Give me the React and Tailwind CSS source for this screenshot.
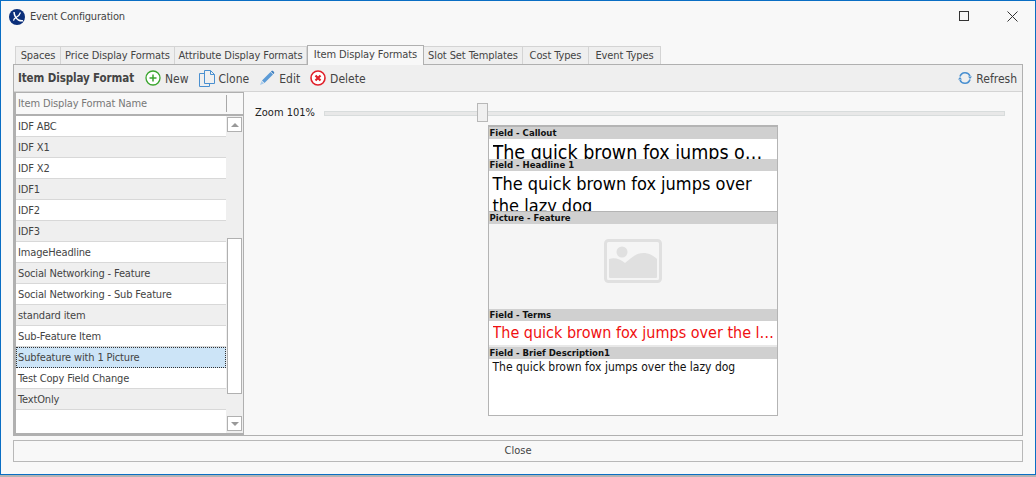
import React from 'react'

const font = 'font-["DejaVu_Sans_Condensed","DejaVu_Sans",sans-serif] font-stretch-semi-condensed'

const tabs = ['Spaces', 'Price Display Formats', 'Attribute Display Formats', 'Item Display Formats', 'Slot Set Templates', 'Cost Types', 'Event Types']
const tabWidths = [46, 114, 132, 117, 99, 66, 72]

const rows = [
  'IDF ABC', 'IDF X1', 'IDF X2', 'IDF1', 'IDF2', 'IDF3', 'ImageHeadline',
  'Social Networking - Feature', 'Social Networking - Sub Feature', 'standard item',
  'Sub-Feature Item', 'Subfeature with 1 Picture', 'Test Copy Field Change', 'TextOnly',
]

function Logo() {
  return (
    <svg width="16" height="16" viewBox="0 0 16 16" className="shrink-0">
      <circle cx="8" cy="8" r="8" fill="#0b2f7a" />
      <path d="M5 3c.3 3.500 2 6.500 4.500 8 1.500.8 3 1 4.500.8" fill="none" stroke="#fff" strokeWidth="1.500" />
      <path d="M11.500 3.500c-.8 2.500-2.500 4-4.500 5-1.300.7-2.300 1.700-2.500 3.200" fill="none" stroke="#fff" strokeWidth="1.200" />
    </svg>
  )
}

function NewIcon() {
  return (
    <svg width="16" height="16" viewBox="0 0 16 16" className="shrink-0">
      <circle cx="8" cy="8" r="7" fill="#fff" stroke="#3aa52e" strokeWidth="1.300" />
      <path d="M8 4.500v7M4.500 8h7" stroke="#3aa52e" strokeWidth="1.500" />
    </svg>
  )
}

function CloneIcon() {
  return (
    <svg width="16" height="17" viewBox="0 0 16 17" className="shrink-0" fill="none" stroke="#4a90d0" strokeWidth="1">
      <path d="M5.500 3.500H.5v13h10v-3" />
      <path d="M5.500.5h6l4 4v9h-10z" fill="#f0f0f0" />
      <path d="M11.500.5v4h4" />
    </svg>
  )
}

function EditIcon() {
  return (
    <svg width="16" height="16" viewBox="0 0 16 16" className="shrink-0">
      <path d="M3 10.500L11.500 2l2.500 2.500L5.500 13z" fill="#5c9bd6" />
      <path d="M12.300 1.200c.6-.6 1.400-.6 2 0l.5.5c.6.6.6 1.400 0 2l-.4.400-2.500-2.500z" fill="#3f7fbe" />
      <path d="M1 15l1.600-4 2.400 2.400z" fill="#a9cbea" />
    </svg>
  )
}

function DeleteIcon() {
  return (
    <svg width="16" height="16" viewBox="0 0 16 16" className="shrink-0">
      <circle cx="8" cy="8" r="7" fill="#fff" stroke="#e0202a" strokeWidth="1.600" />
      <path d="M5.500 5.500l5 5M10.500 5.500l-5 5" stroke="#e0202a" strokeWidth="2.200" />
    </svg>
  )
}

function RefreshIcon() {
  return (
    <svg width="14" height="14" viewBox="0 0 14 14" className="shrink-0" fill="none">
      <path d="M2 5.500A5.300 5.300 0 0 1 12 5" stroke="#4a90d0" strokeWidth="1.600" />
      <path d="M12 8.500A5.300 5.300 0 0 1 2 9" stroke="#4a90d0" strokeWidth="1.600" />
      <path d="M10 5.500h4l-2 2.500zM0 8.500h4L2 6z" fill="#4a90d0" />
    </svg>
  )
}

function PicturePlaceholder() {
  return (
    <svg width="58" height="44" viewBox="0 0 58 44">
      <rect x="1.500" y="1.500" width="55" height="41" rx="3" fill="none" stroke="#e0e0e0" strokeWidth="3" />
      <circle cx="18" cy="13" r="5.500" fill="#e0e0e0" />
      <path d="M5 20c6-2 11 0 16 4 6-5 12-11 20-10 5 .5 9 3 12 6v18a1 1 0 0 1-1 1H6a1 1 0 0 1-1-1z" fill="#e0e0e0" />
    </svg>
  )
}

function ToolButton({ icon, label }) {
  return (
    <div className="flex items-center gap-[4px]">
      {icon}
      <span className="pt-[1px] text-[12px]">{label}</span>
    </div>
  )
}

function FieldBlock({ title, height, children, className }) {
  return (
    <div className={`flex flex-col overflow-hidden ${height}`}>
      <div className="h-[12px] shrink-0 bg-[#d0d0d0] pl-[1px] text-[9.5px] leading-[12px] font-bold text-[#111]">{title}</div>
      <div className={`min-h-0 flex-1 overflow-hidden pl-[4px] ${className}`}>{children}</div>
    </div>
  )
}

export default function App() {
  return (
    <div className={`h-[477px] w-[1036px] overflow-hidden bg-[#b4b4b4] text-[11px] text-[#444] ${font}`}>
      <div className="flex h-[475px] flex-col border border-[#0a6ec4] bg-[#f8f8f8]">
        {/* title bar */}
        <div className="flex h-[31px] shrink-0 items-center pl-[8px]">
          <Logo />
          <span className="ml-[5px] pt-[1px] tracking-[-0.2px] text-[#444]">Event Configuration</span>
          <div className="ml-auto mb-[1px] mr-[17px] flex items-center gap-[38px]">
            <div className="h-[10px] w-[10px] border border-[#333]" />
            <svg width="11" height="11" viewBox="0 0 11 11"><path d="M.5.5l10 10M10.500.5l-10 10" stroke="#333" /></svg>
          </div>
        </div>

        {/* tabs */}
        <div className="mt-[13px] flex h-[19px] shrink-0 items-end pl-[14px]">
          {tabs.map((t, i) =>
            i === 3 ? (
              <div key={t} style={{ width: tabWidths[i] }} className="z-10 mb-[-1px] flex h-[20px] shrink-0 items-center justify-center whitespace-nowrap border border-b-0 border-[#b0b0b0] bg-[#f8f8f8] pb-[1px] tracking-[-0.1px]">{t}</div>
            ) : (
              <div key={t} style={{ width: tabWidths[i] }} className="flex h-[18px] shrink-0 items-center justify-center whitespace-nowrap border border-b-0 border-l-0 border-[#d4d4d4] bg-[#efefef] pt-[1px] tracking-[-0.1px] first:border-l">{t}</div>
            )
          )}
        </div>

        {/* main panel */}
        <div className="mx-[12px] flex h-[372px] shrink-0 flex-col border border-[#b0b0b0] bg-[#f8f8f8]">
          <div className="flex h-[27px] shrink-0 items-center border-b border-[#d4d4d4] bg-[#efefef] pl-[4px] pr-[5px] text-[11.5px]">
            <span className="w-[127px] shrink-0 pt-[1px] font-bold tracking-[-0.1px]">Item Display Format</span>
            <div className="flex items-center gap-[10px]">
              <ToolButton icon={<NewIcon />} label="New" />
              <ToolButton icon={<CloneIcon />} label="Clone" />
              <ToolButton icon={<EditIcon />} label="Edit" />
              <ToolButton icon={<DeleteIcon />} label="Delete" />
            </div>
            <div className="ml-auto">
              <ToolButton icon={<RefreshIcon />} label="Refresh" />
            </div>
          </div>

          <div className="flex min-h-0 flex-1">
            {/* list */}
            <div className="flex w-[230px] shrink-0 flex-col border-r border-[#b0b0b0] tracking-[-0.15px]">
              <div className="flex h-[24px] shrink-0 border-y border-b-2 border-l-2 border-[#b0b0b0]">
                <div className="my-[2px] flex w-[211px] items-center border-r border-r-[#a8a8a8] pl-[2px] pt-[2px] text-[#777]">Item Display Format Name</div>
              </div>
              <div className="flex min-h-0 flex-1 border-b-2 border-l-2 border-[#b0b0b0]">
                <div className="flex w-[210px] shrink-0 flex-col bg-white">
                  {rows.map((r, i) => {
                    const selected = r === 'Subfeature with 1 Picture'
                    return (
                      <div
                        key={r}
                        className={`flex h-[21px] shrink-0 items-center truncate pt-[2px] ${selected ? 'border border-dotted border-[#333] bg-[#cce4f7] pl-[1px]' : `border-b border-[#d8d8d8] pl-[2px] ${i % 2 ? 'bg-[#efefef]' : 'bg-white'}`}`}
                      >
                        {r}
                      </div>
                    )
                  })}
                </div>
                <div className="flex flex-1 flex-col items-center bg-[#efefef] pt-[1px] pb-[2px]">
                  <div className="flex h-[15px] w-[15px] shrink-0 items-center justify-center border border-[#b0b0b0] bg-white">
                    <div className="h-0 w-0 border-x-[4px] border-b-[4px] border-x-transparent border-b-[#999]" />
                  </div>
                  <div className="mt-[106px] h-[156px] w-[15px] shrink-0 border border-[#b0b0b0] bg-white" />
                  <div className="mt-auto flex h-[15px] w-[15px] shrink-0 items-center justify-center border border-[#b0b0b0] bg-white">
                    <div className="h-0 w-0 border-x-[4px] border-t-[4px] border-x-transparent border-t-[#999]" />
                  </div>
                </div>
              </div>
            </div>

            {/* preview */}
            <div className="flex min-w-0 flex-1 flex-col">
              <div className="flex h-[33px] shrink-0 items-center pl-[11px] pr-[17px] pt-[9px] text-[#222]">
                <span className="w-[69px] shrink-0 whitespace-nowrap">Zoom 101%</span>
                <div className="relative h-[5px] flex-1 border border-[#d8dcdc] bg-[#e8e8e8]">
                  <div className="absolute left-[152px] top-[-9px] h-[19px] w-[11px] border border-[#b8b8b8] bg-[#f0f0f0]" />
                </div>
              </div>
              <div className="flex justify-center pr-[1px]">
                <div className="flex h-[291px] w-[290px] flex-col border border-t-2 border-[#b4b4b4] bg-white">
                  <FieldBlock title="Field - Callout" height="h-[32px]" className="whitespace-nowrap bg-white pr-[4px] text-[19.5px] leading-[27px] text-black">
                    <div className="truncate">The quick brown fox jumps over the lazy dog</div>
                  </FieldBlock>
                  <FieldBlock title="Field - Headline 1" height="h-[53px]" className="border-b border-[#b4b4b4] bg-white pr-[4px] pt-[1.5px] text-[18px] leading-[22px] text-black">
                    The quick brown fox jumps over the lazy dog
                  </FieldBlock>
                  <FieldBlock title="Picture - Feature" height="h-[97px]" className="flex items-center justify-center bg-[#f5f5f5] pb-[11px] pr-[4px]">
                    <PicturePlaceholder />
                  </FieldBlock>
                  <FieldBlock title="Field - Terms" height="h-[38px]" className="border-b-2 border-[#e8e8e8] bg-white pr-[1px] text-[16px] leading-[24px] text-[#f01010]">
                    <div className="truncate">The quick brown fox jumps over the lazy dog</div>
                  </FieldBlock>
                  <FieldBlock title="Field - Brief Description1" height="flex-1" className="bg-white pr-[4px] text-[12px] leading-[16px] text-[#111]">
                    The quick brown fox jumps over the lazy dog
                  </FieldBlock>
                </div>
              </div>
            </div>
          </div>
        </div>

        {/* close */}
        <div className="mx-[12px] mt-[4px] flex h-[22px] shrink-0 items-center justify-center border border-[#b8b8b8] bg-[#f8f8f8] pt-[1px]">Close</div>
      </div>
    </div>
  )
}
